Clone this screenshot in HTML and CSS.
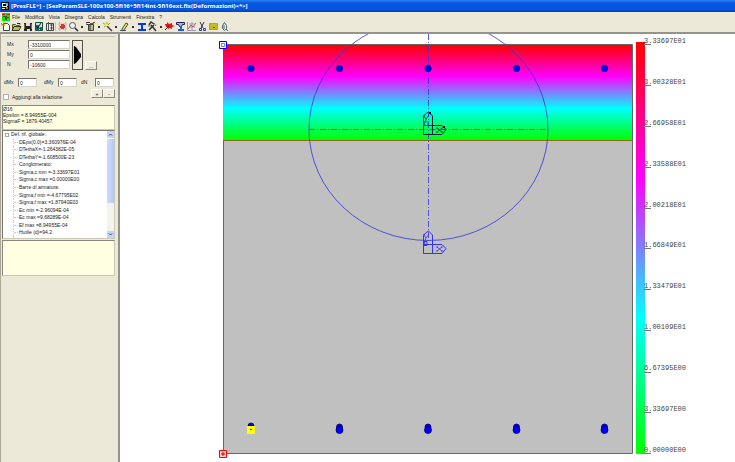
FILE: index.html
```html
<!DOCTYPE html>
<html lang="it">
<head>
<meta charset="utf-8">
<title>PresFLE+</title>
<link rel="stylesheet" href="styles.css">
</head>
<body>
<header class="titlebar">
  <svg class="app-icon" viewBox="0 0 8 8"><path fill="#111" d="M0 0h8v8H0z"/><path fill="#fff" d="M1 1h4v1H2v2h4v1H1z"/><path fill="#3df" d="M4 1h3v3H5V2H4z"/><path fill="#ff3" d="M1 6h3v1H1z"/><path fill="#f44" d="M5 5h2v2H5z"/></svg>
  <h1>[PresFLE+] - [SezParamSLE-100x100-5fi16+5fi14int-5fi16ext.flx(Deformazioni)&lt;*&gt;]</h1>
</header>
<nav class="menubar">
  <svg class="doc-icon" viewBox="0 0 8 8"><path fill="#0e0" d="M0 0h8v8H0z"/><path fill="#b22" d="M0 1h3v1H0zM5 1h3v1H5zM3 3h2v4H3z"/><path fill="#163" d="M1 3h2v1H1zM5 4h2v1H5z"/></svg>
  <a href="#">File</a><a href="#">Modifica</a><a href="#">Vista</a><a href="#">Disegna</a><a href="#">Calcola</a><a href="#">Strumenti</a><a href="#">Finestra</a><a href="#">?</a>
</nav>
<div class="toolbar">
  <button aria-label="Nuovo"><svg viewBox="0 0 11 11"><path fill="#fff" stroke="#444" d="M3.500 2.500h4l2 2v5h-6z"/><path stroke="#a90" d="M1 2l3 3M4 1v4M1 4h4"/></svg></button>
  <button aria-label="Apri"><svg viewBox="0 0 11 11"><path fill="#cc2" stroke="#553" d="M1.500 9V3.500h3l1 1h3v2"/><path fill="#bb5" stroke="#332" d="M1 9.500l2-4h7l-2 4z"/><path stroke="#222" fill="none" d="M6 2.500h3v1"/></svg></button>
  <button aria-label="Salva"><svg viewBox="0 0 11 11"><path fill="#222" d="M2 2h8v8H2z"/><path fill="#ddd" d="M4 2h4v3H4zM5 8h3v2H5z"/><path fill="#773" d="M2 3h1v5H2zM9 3h1v5H9z"/></svg></button>
  <button aria-label="Immagine"><svg viewBox="0 0 11 11"><path fill="#cdd" stroke="#154" d="M2.500 1.500h7v8h-7z"/><path fill="#078" d="M3 4h3v5H3zM7 6h2v3H7z"/><path stroke="#222" d="M4 8l4-6M2 5l6 3"/></svg></button>
  <button aria-label="Relazione"><svg viewBox="0 0 11 11"><path fill="#eee" stroke="#444" d="M2.500 2.500h7v7h-7z"/><path stroke="#555" d="M4.500 1v8M7.500 3v6M6 4h3M6 7h3"/></svg></button>
  <span class="sep"></span>
  <button aria-label="Ridisegna"><svg viewBox="0 0 11 11"><path stroke="#bdbab0" d="M1 3h9M1 8h9M2.500 1v9M8.500 1v9"/><path fill="#d33" d="M4 3h3v1h1v3H7v1H4V7H3V5h1z"/></svg></button>
  <button aria-label="Zoom"><svg viewBox="0 0 11 11"><circle cx="4.500" cy="4.500" r="3" fill="#eef" stroke="#555"/><path stroke="#222" stroke-width="1.500" d="M7 7l3 3"/></svg></button>
  <button class="drop" aria-label="Opzioni zoom"></button>
  <button aria-label="Griglia"><svg viewBox="0 0 11 11"><path fill="#bb9" stroke="#443" d="M3.500 3.500h5v6h-5z"/><path stroke="#333" d="M1 1.500h4M5 3l4-1M5 4v5M1 3l3 1"/><path fill="#c33" d="M8 1h2v1H8z"/></svg></button>
  <button class="drop" aria-label="Opzioni griglia"></button>
  <button aria-label="Evidenzia"><svg viewBox="0 0 11 11"><path stroke="#444" stroke-width="1.500" d="M5 5l5 5"/><path stroke="#991" d="M1 2l3 2M5 1v3M2 6l3-2M6 4l2-2"/><path fill="#ee4" d="M3 3h3v2H3z"/></svg></button>
  <button class="drop" aria-label="Opzioni evidenzia"></button>
  <button aria-label="Matita"><svg viewBox="0 0 11 11"><path fill="#ee6" stroke="#444" d="M3 8l4-6 2 1-4 6-2 1z"/><path stroke="#555" d="M1 9.500h6"/></svg></button>
  <button class="drop" aria-label="Opzioni matita"></button>
  <button aria-label="Profilo"><svg viewBox="0 0 11 11"><path fill="#0637e8" d="M2 2h8v2H7v4h3v2H2V8h3V4H2z"/></svg></button>
  <button aria-label="Strumenti"><svg viewBox="0 0 11 11"><path stroke="#333" stroke-width="1.500" fill="none" d="M2 9l5-5M4 4l5 6M2 4l2-3 3 2"/><path stroke="#774" d="M1 5h3M7 2l2 3"/></svg></button>
  <button class="drop" aria-label="Opzioni strumenti"></button>
  <button aria-label="Calcola"><svg viewBox="0 0 11 11"><path fill="#e11" d="M1 3h2V1l2 2 3-1v2l3 1-3 1v2L6 7 4 8V6H2z"/><path stroke="#422" d="M1 9l4-4"/></svg></button>
  <button aria-label="Verifica"><svg viewBox="0 0 11 11"><path fill="#9bd" stroke="#225" d="M1.500 1.500h8v2h-2l-1 2h-2l-1-2h-2z"/><path fill="#225bd8" d="M5 5h2v3h2v2H3V8h2z"/></svg></button>
  <button aria-label="Diagramma"><svg viewBox="0 0 11 11"><path stroke="#99b" fill="none" d="M1.500 1v8.500H10M3 3h6M3 6h6M6 1v8"/><path stroke="#c55" fill="none" d="M2 8l3-4 2 2 3-4"/></svg></button>
  <button aria-label="Taglia"><svg viewBox="0 0 11 11"><path stroke="#334" fill="none" d="M3 1l3 6M7 1L4 7"/><path stroke="#339" fill="none" d="M2.500 7.500h2v2h-2zM6.500 7.500h2v2h-2z"/></svg></button>
  <button aria-label="Nota"><svg viewBox="0 0 11 11"><path fill="#c8bd18" stroke="#a9a04a" d="M1.500 2.500h8v6h-8z"/><path fill="#555" d="M5 6h2v1H5z"/></svg></button>
  <button aria-label="Guida"><svg viewBox="0 0 11 11"><path fill="#dee" stroke="#466" d="M5.500 1.500l2 3v3l-2 2-2-2v-3z"/><path stroke="#477" d="M5 4v4M7 8l2 2"/></svg></button>
</div>
<main class="workspace">
  <aside class="sidebar">
    <form class="loads">
      <div class="forces">
        <label for="mx">Mx</label><input id="mx" value="-3310000">
        <label for="my">My</label><input id="my" value="0">
        <label for="n">N</label><input id="n" value="-10600">
      </div>
      <button type="button" class="go" aria-label="Esegui"><svg viewBox="0 0 8 26"><path fill="#e6df35" d="M0 4h2v18H0z"/><path d="M1 4l2 1 5 7v3l-5 6-2 1z"/></svg></button>
      <button type="button" class="more">...</button>
    </form>
    <form class="steps">
      <label for="dmx">dMx</label><input id="dmx" value="0">
      <label for="dmy">dMy</label><input id="dmy" value="0">
      <label for="dn">dN</label><input id="dn" value="0">
    </form>
    <div class="report">
      <label><input type="checkbox">Aggiungi alla relazione</label>
      <span class="pair"><button>+</button><button>-</button></span>
    </div>
    <div class="note info">Ø16<br>Epsilon = 8.94955E-004<br>SigmaF = 1879.40457</div>
    <div class="tree">
      <ul>
        <li class="root">Def. rif. globale:</li>
        <li>DEps(0,0)=3.360976E-04</li>
        <li>DTethaX=-1.264382E-05</li>
        <li>DTethaY=-1.608500E-23</li>
        <li>Conglomerato:</li>
        <li>Sigma,c min =-3.33697E01</li>
        <li>Sigma,c max =0.00000E00</li>
        <li>Barre di armatura:</li>
        <li>Sigma,f min =-4.67795E02</li>
        <li>Sigma,f max =1.87940E03</li>
        <li>Ec min =-2.96094E-04</li>
        <li>Ec max =9.68289E-04</li>
        <li>Ef max =8.94955E-04</li>
        <li>Hutile (d)=94.2</li>
        <li>Hasse n =23.4194282</li>
      </ul>
      <div class="scroll">
        <button aria-label="Su"><svg viewBox="0 0 7 7"><path fill="none" stroke="#345" d="M2 4.500l1.500-1.500L5 4.500"/></svg></button>
        <span class="thumb"></span>
        <button aria-label="Giù"><svg viewBox="0 0 7 7"><path fill="none" stroke="#345" d="M2 2.500L3.500 4 5 2.500"/></svg></button>
      </div>
    </div>
    <div class="note blank"></div>
  </aside>
  <section class="canvas">
    <svg class="drawing" viewBox="120 34 615 428" preserveAspectRatio="xMinYMin meet">
      <defs>
        <linearGradient id="ramp" x1="0" y1="0" x2="0" y2="1">
          <stop offset="0" stop-color="#f00"/><stop offset=".333" stop-color="#f0f"/><stop offset=".667" stop-color="#0ff"/><stop offset="1" stop-color="#0f0"/>
        </linearGradient>
        <g id="axes" fill="none" stroke-width="1">
          <path d="M-4.500 4.500V-13l2-3 3-2 4 4V4.500M-4.500-4.500H14l4 4-4 5H-4.500z"/>
          <path d="M9-2l5 4M14-2L9 2M8-2h2M13-2h2M8 2h2M13 2h2M-5-15l3 4 3-4M-2-11l-2 6" stroke-width=".8"/>
        </g>
        <g id="bars"><circle cy="-3" r="3"/><circle r="3.500"/></g>
      </defs>
      <path fill="#c0c0c0" stroke="#666" d="M223.500 44.500h409v409h-409z"/>
      <path fill="url(#ramp)" d="M223 45h409v95H223z"/>
      <path stroke="#8a6c20" d="M223 140.500h409"/>
      <g fill="none" stroke="#3434dc">
        <ellipse cx="428.500" cy="129.500" rx="119.500" ry="111" stroke-width=".8"/>
        <path stroke-dasharray="6 2 1 2" stroke-width=".8" d="M309 129.500h239M428.500 34v207"/>
      </g>
      <use href="#axes" x="428" y="130" stroke="#124"/>
      <path d="M429 112h2v2h-2zM443 126h2v2h-2z"/>
      <path fill="none" stroke="#06c" d="M424 121.500h4v4h-4z"/>
      <use href="#axes" x="428" y="249" stroke="#3434f0"/>
      <path fill="none" stroke="#3434f0" d="M424 241.500h3v4h-3z"/>
      <g fill="#00f" stroke="#006" stroke-width=".8">
        <circle cx="251" cy="68.500" r="3.200"/><circle cx="339.500" cy="68.500" r="3.200"/><circle cx="428" cy="68.500" r="3.200"/><circle cx="516.500" cy="68.500" r="3.200"/><circle cx="604.500" cy="68.500" r="3.200"/>
        <use href="#bars" x="251" y="429"/><use href="#bars" x="339.500" y="430"/><use href="#bars" x="428" y="430"/><use href="#bars" x="516.500" y="430"/><use href="#bars" x="604.500" y="430"/>
      </g>
      <path fill="#ff0" d="M247 426h8v8h-8z"/><path fill="#334" d="M250 429h2v1h-2z"/>
      <path fill="#fff" stroke="#00f" d="M219.500 41.500h7v7h-7z"/><path fill="none" stroke="#77f" d="M221.500 43.500h3v3h-3z"/>
      <path fill="#fcc" stroke="#f00" d="M219.500 450.500h7v7h-7z"/><path stroke="#c00" d="M221 454h4M223 452v4"/>
      <path fill="url(#ramp)" d="M636 42h9v412h-9z"/>
      <path stroke="#777" d="M644 44.500h7M644 85.500h7M644 126.500h7M644 167.500h7M644 208.500h7M644 248.500h7M644 289.500h7M644 330.500h7M644 372.500h7M644 412.500h7M644 453.500h7"/>
      <g class="scale">
        <text x="644" y="43">3.33697E01</text><text x="644" y="84">3.00328E01</text><text x="644" y="125">2.66958E01</text><text x="644" y="166">2.33588E01</text><text x="644" y="207">2.00218E01</text><text x="644" y="247">1.66849E01</text><text x="644" y="288">1.33479E01</text><text x="644" y="329">1.00109E01</text><text x="644" y="370">6.67395E00</text><text x="644" y="411">3.33697E00</text><text x="644" y="452">0.00000E00</text>
      </g>
    </svg>
  </section>
</main>
</body>
</html>
```
FILE: styles.css
```css
*, *::before { box-sizing: border-box; }
html, body { height: 100%; }
body {
  margin: 0;
  display: flex;
  flex-direction: column;
  overflow: hidden;
  background: #ece9d8;
  color: #222;
  font: 5px/8px "Liberation Sans", Arial, sans-serif;
}
button, input { font: inherit; color: inherit; margin: 0; padding: 0; border-radius: 0; }
a { color: inherit; text-decoration: none; }
svg { display: block; }

.titlebar {
  display: flex;
  align-items: center;
  gap: 2px;
  height: 12px;
  padding-left: 1px;
  background: linear-gradient(#2a83f2, #0757e0 25%, #0553e0 80%, #0340b0);
}
.titlebar h1 { margin: 0; color: #fff; font: bold 6px/12px "Noto Sans", "Liberation Sans", sans-serif; white-space: nowrap; }
.app-icon, .doc-icon { width: 8px; height: 8px; }
.menubar { display: flex; align-items: center; gap: 5px; height: 9px; padding-left: 2px; }
.doc-icon { margin-right: -3px; }

.toolbar { display: flex; align-items: center; height: 13px; border-bottom: 2px solid #96938a; }
.toolbar button { width: 11px; height: 11px; border: 0; background: none; }
.toolbar svg { width: 11px; height: 11px; }
.toolbar .drop { display: grid; place-items: center; width: 6px; }
.toolbar .drop::before { content: ""; width: 2px; height: 2px; background: #333; }
.sep { width: 1px; height: 9px; margin-right: 1px; background: #c8c5b2; }

.workspace { flex: 1; min-height: 0; display: flex; }
.sidebar {
  flex: none;
  width: 120px;
  padding: 2px 3px 0 1px;
  border-left: 1px solid #aaa797;
  border-right: 2px solid #96938a;
}
.sidebar input:not([type]) {
  min-width: 0;
  width: 100%;
  height: 9px;
  padding-left: 1px;
  background: #fff;
  border: 1px solid #d8d5c8;
  border-top-color: #77746a;
  border-left-color: #77746a;
}
.loads { display: flex; gap: 2px; padding: 3px 0 8px 5px; border-top: 1px solid #cbc8b8; }
.forces { display: grid; grid-template-columns: 21px 42px; row-gap: 1px; align-content: start; }
.go { width: 11px; height: 30px; background: #ece9d8; border: 1px solid #55534c; }
.go svg { width: 8px; height: 26px; }
.more, .pair button {
  width: 12px;
  height: 9px;
  line-height: 6px;
  background: #f0eee0;
  border: 1px solid #fff;
  border-right-color: #8a877c;
  border-bottom-color: #8a877c;
}
.more { align-self: flex-end; }
.steps { display: grid; grid-template-columns: 14px 26px 14px 23px 14px 19px; padding: 0 0 2px 2px; }
.sidebar .steps input:not([type]) { width: 19px; }
.report { display: flex; justify-content: space-between; height: 16px; }
.report label { display: flex; align-items: center; gap: 3px; }
.report input {
  appearance: none;
  width: 6px;
  height: 6px;
  margin-left: 1px;
  background: #fff;
  border: 1px solid #b5b2a5;
}
.pair { display: flex; }
.note { background: #ffffe1; border: 1px solid #cbc8b8; border-top-color: #8a877c; border-left-color: #8a877c; }
.info { height: 25px; line-height: 6px; }
.blank { height: 36px; margin-top: 1px; }

.tree {
  display: flex;
  height: 109px;
  overflow: hidden;
  background: #fff;
  border: 1px solid #cbc8b8;
  border-top-color: #77746a;
  border-left-color: #77746a;
}
.tree ul {
  flex: 1;
  display: grid;
  grid-auto-rows: 1fr;
  height: 113px;
  margin: 0 0 0 2px;
  padding: 0;
  line-height: 7px;
  list-style: none;
  white-space: nowrap;
}
.tree li { display: flex; align-items: center; margin-left: 8px; border-left: 1px dotted #ccc; }
.tree li::before { content: ""; width: 4px; margin-right: 1px; border-top: 1px dotted #ccc; }
.tree .root { margin-left: 0; border: 0; }
.tree .root::before { width: 4px; height: 4px; margin-right: 2px; border: 1px solid #aaa; }
.scroll { display: flex; flex-direction: column; width: 7px; background: #f4f3ee; }
.scroll button { width: 7px; height: 7px; border: 0; background: #c3d3fb; }
.scroll svg { width: 7px; height: 7px; }
.thumb { height: 65px; margin-bottom: auto; background: linear-gradient(90deg, #cfdcff, #b3c8f8); border-top: 1px solid #fff; }

.canvas { flex: 1; min-width: 0; background: #fff; }
.drawing { width: 100%; }
.scale { font: 7px "Liberation Mono", "Courier New", monospace; fill: #444; }
```
